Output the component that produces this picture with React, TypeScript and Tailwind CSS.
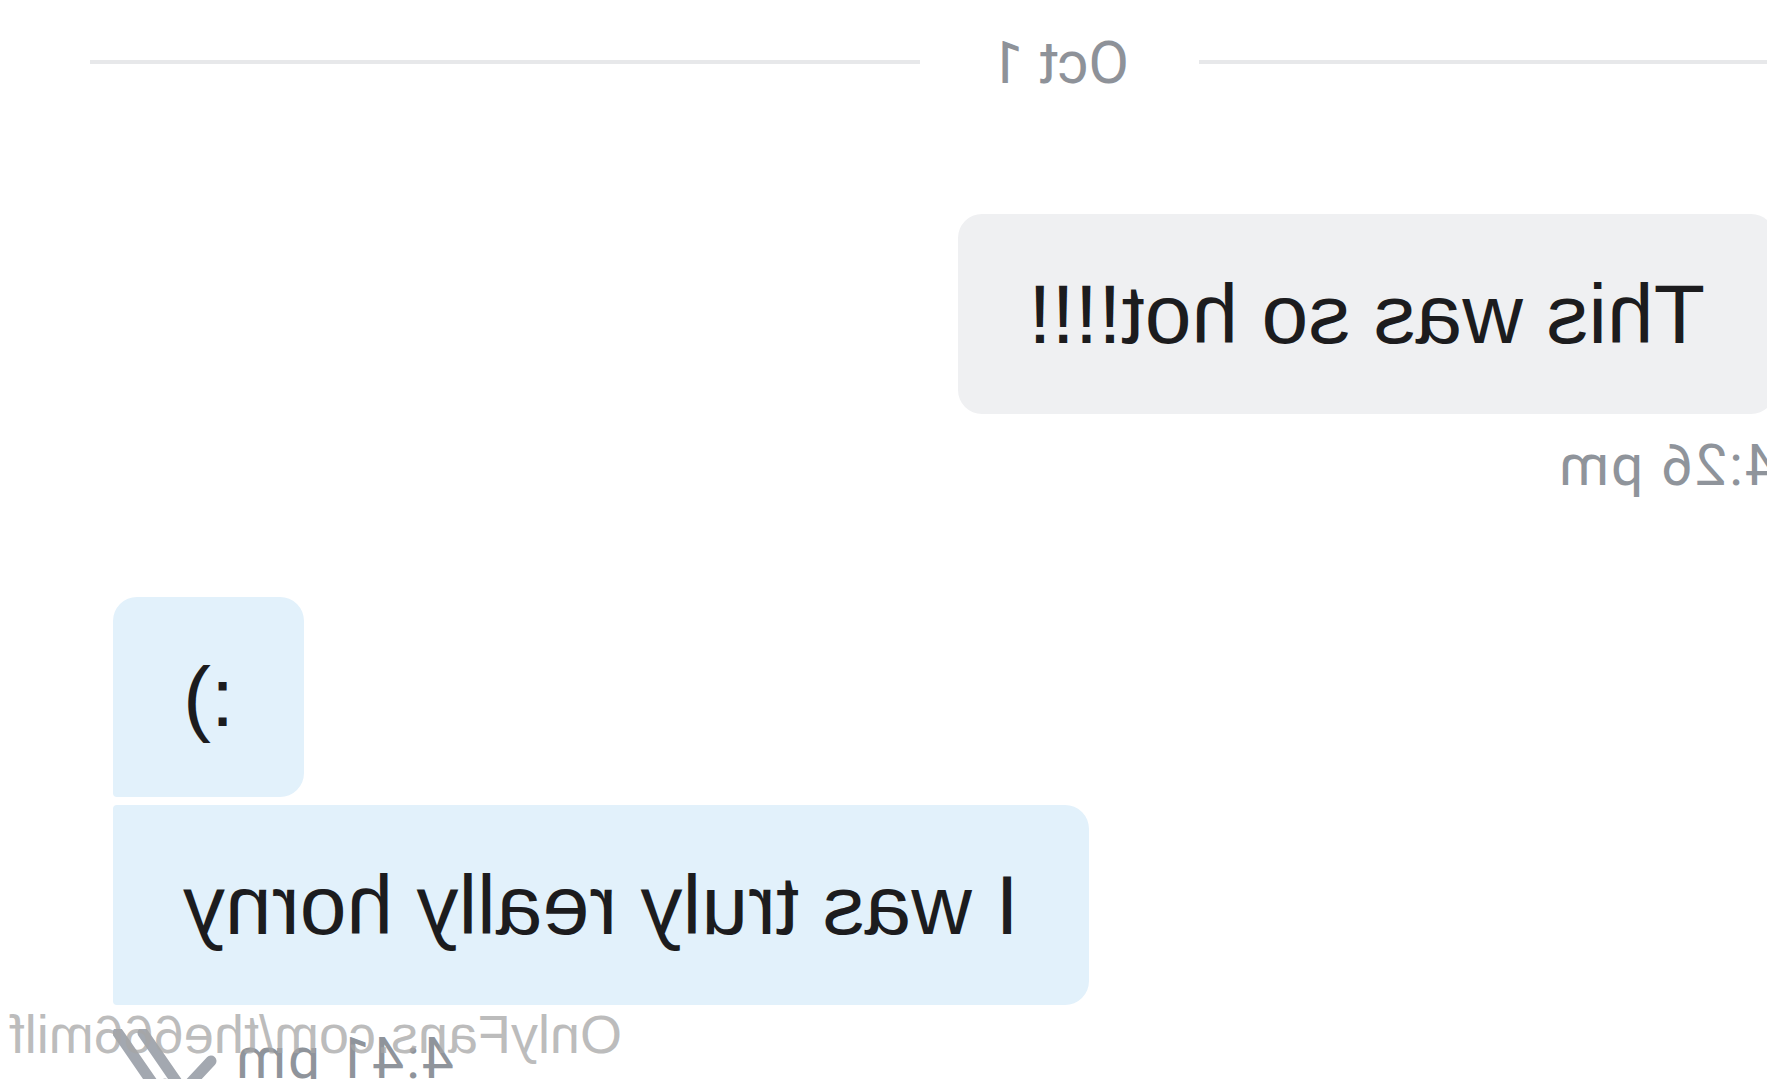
import { ReactNode } from 'react';

type Side = 'in' | 'out';

interface BubbleProps {
  side: Side;
  corners: string;
  children: ReactNode;
}

function Bubble({ side, corners, children }: BubbleProps) {
  const tone = side === 'out' ? 'bg-[#e2f1fb]' : 'bg-[#eff0f2]';
  return (
    <div
      className={`${tone} ${corners} px-[70px] py-[50px] text-[84px] leading-[100px] text-[#1c1c1e] whitespace-nowrap`}
    >
      {children}
    </div>
  );
}

function DoubleCheck() {
  return (
    <svg
      width="104"
      height="80"
      viewBox="0 0 104 80"
      fill="none"
      stroke="#a3a8b0"
      strokeWidth="11"
      strokeLinecap="round"
      strokeLinejoin="round"
    >
      <path d="M6 32 L34 62 L74 4" />
      <path d="M99 4 L59 62 L52 55" />
    </svg>
  );
}

function DateDivider({ label }: { label: string }) {
  return (
    <div className="flex h-[124px] items-center">
      <div className="h-[4px] w-[568px] bg-[#e7e8ea]" />
      <span className="mx-[70px] font-['Roboto',Arial,sans-serif] text-[59px] leading-none text-[#8e9299]">
        {label}
      </span>
      <div className="mr-[90px] h-[4px] flex-1 bg-[#e7e8ea]" />
    </div>
  );
}

export default function App() {
  return (
    <div className="h-[1079px] w-[1767px] overflow-hidden bg-white">
      {/* the whole conversation is shown flipped left-to-right */}
      <div className="relative h-full w-full -scale-x-100 font-['Liberation_Sans',Arial,sans-serif]">
        <DateDivider label="Oct 1" />

        <div className="mt-[90px] flex flex-col items-start">
          <div className="-ml-[8px]">
            <Bubble side="in" corners="rounded-[24px]">
              This was so hot!!!!
            </Bubble>
          </div>
          <span className="-ml-[10px] mt-[23px] font-['Roboto',Arial,sans-serif] text-[57px] leading-none tracking-[2px] text-[#8f949b]">
            4:26 pm
          </span>
        </div>

        <div className="mt-[103px] flex flex-col items-end pr-[113px]">
          <Bubble side="out" corners="rounded-[24px] rounded-br-[4px]">
            :)
          </Bubble>
          <div className="mt-[8px]">
            <Bubble side="out" corners="rounded-[24px] rounded-r-[4px]">
              I was truly really horny
            </Bubble>
          </div>
          <div className="mt-[24px] flex items-start gap-[17px]">
            <span className="pt-[1px] font-['Roboto',Arial,sans-serif] text-[57px] leading-none tracking-[2px] text-[#8f949b]">
              4:41 pm
            </span>
            <DoubleCheck />
          </div>
        </div>

        <span className="absolute left-[1145px] top-[1007px] text-[54px] leading-none text-[#a6a6a6]/75 whitespace-nowrap">
          OnlyFans.com/the666milf
        </span>
      </div>
    </div>
  );
}
